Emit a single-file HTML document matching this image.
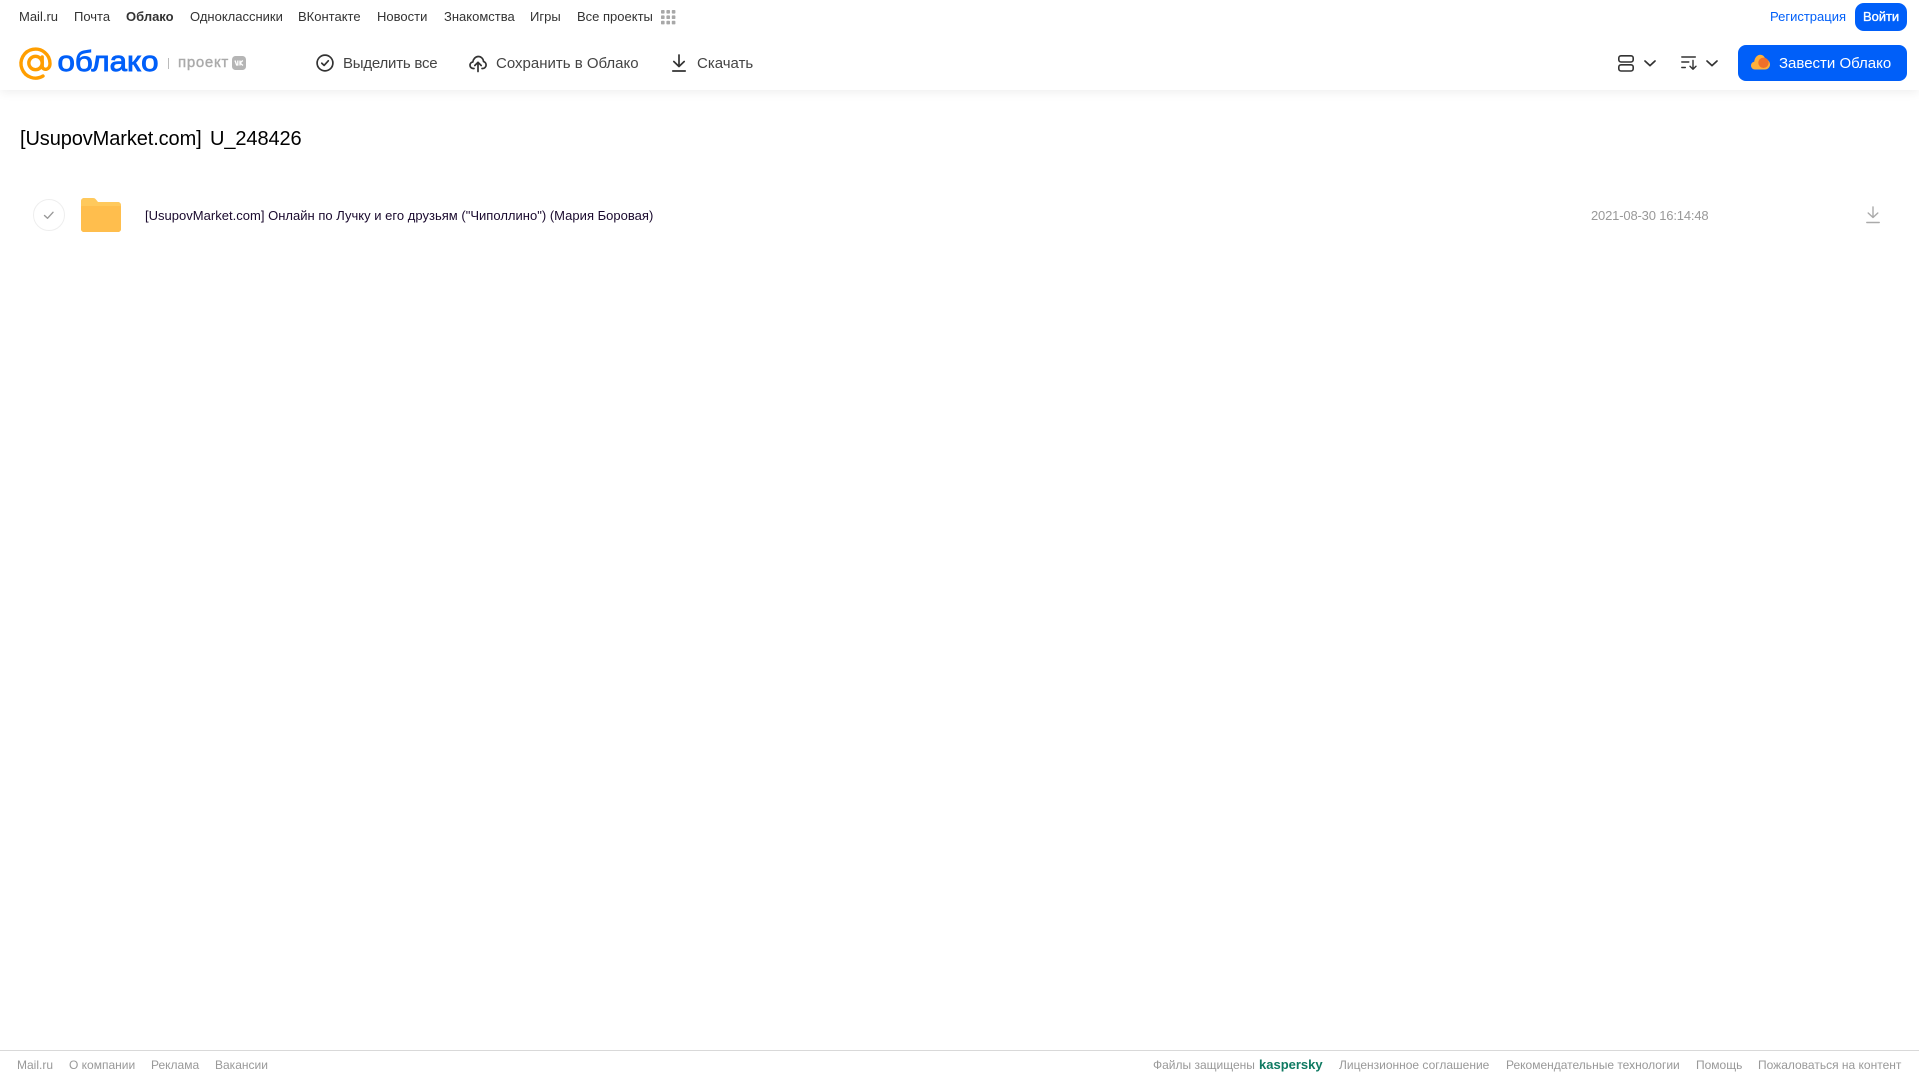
<!DOCTYPE html>
<html lang="ru">
<head>
<meta charset="utf-8">
<title>Облако</title>
<style>
html,body{margin:0;padding:0;background:#fff;width:1919px;height:1079px;overflow:hidden;font-family:"Liberation Sans",Arial,sans-serif}
.t{position:absolute;white-space:nowrap;line-height:20px;height:20px}
.n{font-size:13px;color:#333;top:7px}
.b{font-size:15px;color:#444;top:54px;transform-origin:left center}
.f{font-size:12px;color:#999;top:1055px}
svg{position:absolute;overflow:visible}
#hdr{position:absolute;left:0;top:0;width:1919px;height:90px;background:#fff;box-shadow:0 2px 10px rgba(0,0,0,.07)}
#line{position:absolute;left:0;top:1050px;width:1919px;height:1px;background:#d9d9d9}
.btn{position:absolute;background:#005ff9}
</style>
</head>
<body>
<div id="hdr"></div>

<span class="t n" style="left:19px">Mail.ru</span>
<span class="t n" style="left:74px">Почта</span>
<span class="t n" style="left:126px;font-weight:bold">Облако</span>
<span class="t n" style="left:190px">Одноклассники</span>
<span class="t n" style="left:298px">ВКонтакте</span>
<span class="t n" style="left:377px">Новости</span>
<span class="t n" style="left:444px">Знакомства</span>
<span class="t n" style="left:530px">Игры</span>
<span class="t n" style="left:577px">Все проекты</span>
<svg style="left:661px;top:10px" width="15" height="15" viewBox="0 0 15 15" fill="#a8a8a8">
<rect x="0" y="0" width="3.6" height="3.6" rx=".8"/><rect x="5.4" y="0" width="3.6" height="3.6" rx=".8"/><rect x="10.8" y="0" width="3.6" height="3.6" rx=".8"/>
<rect x="0" y="5.4" width="3.6" height="3.6" rx=".8"/><rect x="5.4" y="5.4" width="3.6" height="3.6" rx=".8"/><rect x="10.8" y="5.4" width="3.6" height="3.6" rx=".8"/>
<rect x="0" y="10.8" width="3.6" height="3.6" rx=".8"/><rect x="5.4" y="10.8" width="3.6" height="3.6" rx=".8"/><rect x="10.8" y="10.8" width="3.6" height="3.6" rx=".8"/>
</svg>

<span class="t n" style="left:1770px;color:#005ff9">Регистрация</span>
<div class="btn" style="left:1855px;top:3px;width:52px;height:28px;border-radius:9px"></div>
<span class="t n" style="left:1863px;color:#fff;-webkit-text-stroke:.35px #fff;letter-spacing:-.05px">Войти</span>

<!-- logo -->
<svg style="left:19px;top:47px" width="33" height="33" viewBox="0 0 33 33" fill="none">
<circle cx="16.500" cy="16" r="6.700" stroke="#ff9e00" stroke-width="3.400"/>
<path d="M23.200 10V19C23.200 23.800 31 23.800 31 16.500A14.500 14.500 0 1 0 24 29" stroke="#ff9e00" stroke-width="3.400" stroke-linecap="round"/>
</svg>
<svg style="left:56px;top:42px" width="106" height="40" viewBox="0 0 106 40">
<text x="1.500" y="29" font-family="Liberation Sans, sans-serif" font-size="29" font-weight="400" fill="#005ff9" stroke="#005ff9" stroke-width=".9" textLength="101" lengthAdjust="spacingAndGlyphs">облако</text>
</svg>
<div style="position:absolute;left:168px;top:58px;width:1px;height:11px;background:#bbb"></div>
<span class="t" style="left:178px;top:53px;font-size:15px;color:#aaa;-webkit-text-stroke:.4px #aaa;letter-spacing:.7px">проект</span>
<svg style="left:232px;top:56px" width="14" height="14" viewBox="0 0 14 14">
<rect width="14" height="14" rx="3.500" fill="#b5b5b5"/>
<path d="M3 4.500l1.600 4.500h1.200V4.500M10.800 4.500L8 7l3 2.500M8 4.500v5" fill="none" stroke="#fff" stroke-width="1.300"/>
</svg>

<!-- toolbar -->
<svg style="left:316px;top:54px" width="18" height="18" viewBox="0 0 18 18" fill="none" stroke="#333" stroke-width="1.700" stroke-linecap="round" stroke-linejoin="round">
<circle cx="9" cy="9" r="7.900"/><path d="M5.800 9.200l2.300 2.200 4.200-4.600"/>
</svg>
<span class="t b" style="left:343px;letter-spacing:-.22px">Выделить все</span>

<svg style="left:469px;top:54px" width="18" height="18" viewBox="0 0 18 18" fill="none" stroke="#333" stroke-width="1.700" stroke-linecap="round" stroke-linejoin="round">
<path d="M5 14.500H4.200C2.400 14.500 1 13 1 11.200c0-1.700 1.200-3 2.800-3.200C4.300 5 6.400 2.500 9.300 2.500c2.800 0 5 2.200 5.200 5 1.500.4 2.600 1.900 2.600 3.500 0 1.900-1.500 3.500-3.400 3.500H13"/>
<path d="M9 17.500V8.500M5.800 11.500L9 8.300l3.200 3.200"/>
</svg>
<span class="t b" style="left:496px">Сохранить в Облако</span>

<svg style="left:672px;top:54px" width="14" height="18" viewBox="0 0 14 18" fill="none" stroke="#333" stroke-width="1.700" stroke-linecap="round" stroke-linejoin="round">
<path d="M7 1v11M1.800 7.500L7 12.500l5.200-5M.8 17h12.400"/>
</svg>
<span class="t b" style="left:697px">Скачать</span>

<!-- view controls -->
<svg style="left:1618px;top:55px" width="16" height="17" viewBox="0 0 16 17" fill="none" stroke="#333" stroke-width="1.600">
<rect x=".8" y=".8" width="14.400" height="6.200" rx="2.200"/><rect x=".8" y="9.800" width="14.400" height="6.200" rx="2.200"/>
</svg>
<svg style="left:1644px;top:60px" width="12" height="7" viewBox="0 0 12 7" fill="none" stroke="#333" stroke-width="1.700" stroke-linecap="round" stroke-linejoin="round"><path d="M1 1l5 4.600L11 1"/></svg>
<svg style="left:1681px;top:56px" width="16" height="14" viewBox="0 0 16 14" fill="none" stroke="#333" stroke-width="1.400" stroke-linecap="round" stroke-linejoin="round">
<path d="M.8 1h13.500M.8 6h7M.8 11.500h3.500M12 4.500v8.500M9 10.300l3 3 3-3"/>
</svg>
<svg style="left:1706px;top:60px" width="12" height="7" viewBox="0 0 12 7" fill="none" stroke="#333" stroke-width="1.700" stroke-linecap="round" stroke-linejoin="round"><path d="M1 1l5 4.600L11 1"/></svg>

<div class="btn" style="left:1738px;top:45px;width:169px;height:36px;border-radius:8px"></div>
<svg style="left:1751px;top:54px" width="19" height="16" viewBox="0 0 19 16">
<path d="M4 15.500C1.800 15.500 0 13.800 0 11.500 0 9.500 1.400 8 3.200 7.700 3.800 3.500 6.300.8 9.200.8c2.700 0 4.600 2 5.100 4.400 2.700.2 4.700 2.500 4.700 5.200 0 2.900-2.200 5.100-5 5.100z" fill="#ffb03a"/>
<circle cx="12.500" cy="8.800" r="5.200" fill="#f0702a"/>
</svg>
<span class="t b" style="left:1779px;color:#fff">Завести Облако</span>

<!-- title -->
<span class="t" style="left:20px;top:127px;height:24px;line-height:24px;font-size:20px;color:#000;word-spacing:3px;letter-spacing:-.1px">[UsupovMarket.com] U_248426</span>

<!-- row -->
<svg style="left:33px;top:199px" width="32" height="32" viewBox="0 0 32 32" fill="none">
<circle cx="16" cy="16" r="15.500" stroke="#eeeeee"/>
<path d="M11.500 16.500l3 2.800 5.500-6" stroke="#999" stroke-width="1.400" stroke-linecap="round" stroke-linejoin="round"/>
</svg>
<svg style="left:81px;top:198px" width="40" height="34" viewBox="0 0 40 34">
<path d="M0 3C0 1.300 1.300 0 3 0h9c1.500 0 2.300.6 3.200 1.700L17 4h20c1.700 0 3 1.300 3 3v24c0 1.700-1.300 3-3 3H3c-1.700 0-3-1.300-3-3z" fill="#ffc95c"/>
<path d="M0 9c0-.6.400-1 1-1h38c.6 0 1 .4 1 1v22c0 1.700-1.300 3-3 3H3c-1.700 0-3-1.300-3-3z" fill="#ffbe4d"/>
</svg>
<span class="t" style="left:145px;top:206px;font-size:13px;color:#1a0a2e;letter-spacing:.015px">[UsupovMarket.com] Онлайн по Лучку и его друзьям ("Чиполлино") (Мария Боровая)</span>
<span class="t" style="left:1591px;top:206px;font-size:13px;color:#999;letter-spacing:-.17px">2021-08-30 16:14:48</span>
<svg style="left:1866px;top:206px" width="14" height="18" viewBox="0 0 14 18" fill="none" stroke="#aaa" stroke-width="1.400" stroke-linecap="round" stroke-linejoin="round">
<path d="M7 1v10.500M2.200 7L7 11.500 11.800 7M.8 16.500h12.400"/>
</svg>

<!-- footer -->
<div id="line"></div>
<span class="t f" style="left:17px">Mail.ru</span>
<span class="t f" style="left:69px">О компании</span>
<span class="t f" style="left:151px">Реклама</span>
<span class="t f" style="left:215px">Вакансии</span>
<span class="t f" style="left:1153px">Файлы защищены</span>
<span class="t f" style="left:1259px;color:#0f7a62;font-weight:bold;font-size:13px">kaspersky</span>
<span class="t f" style="left:1339px">Лицензионное соглашение</span>
<span class="t f" style="left:1506px">Рекомендательные технологии</span>
<span class="t f" style="left:1696px">Помощь</span>
<span class="t f" style="left:1758px">Пожаловаться на контент</span>
</body>
</html>
